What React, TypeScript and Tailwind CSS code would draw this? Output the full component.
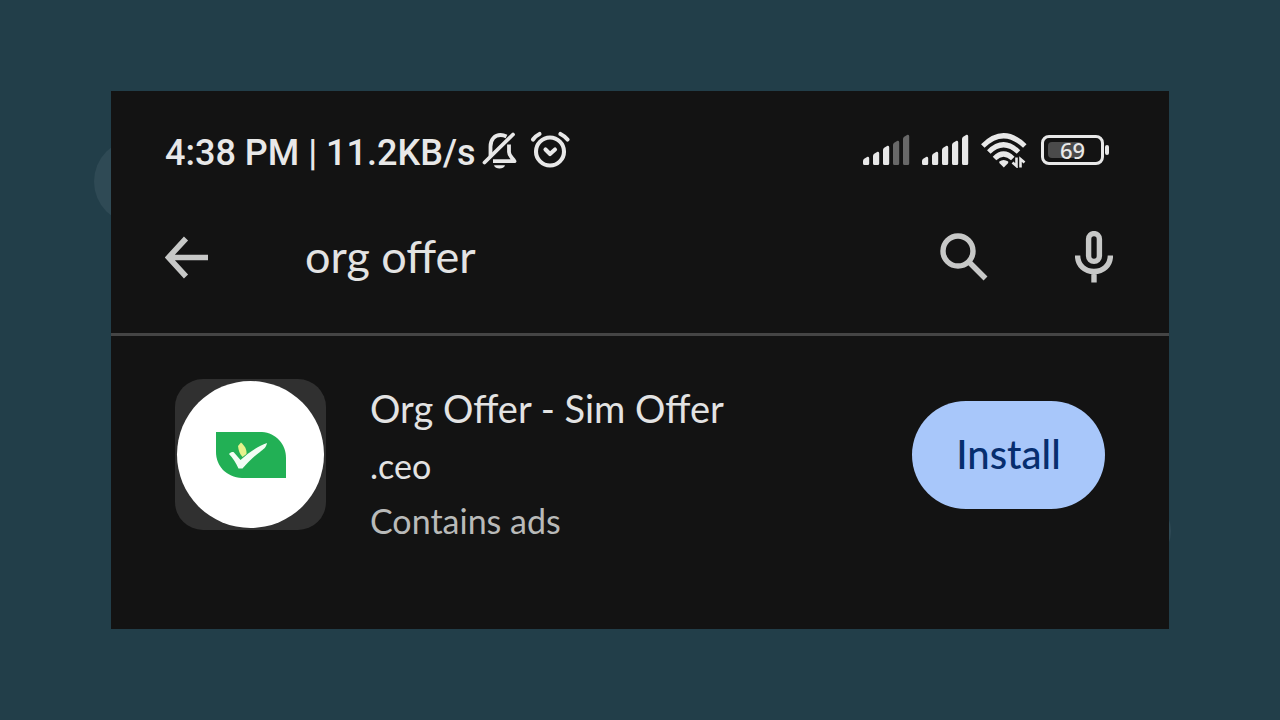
import { useState } from "react";

const APP = {
  name: "Org Offer - Sim Offer",
  developer: ".ceo",
  note: "Contains ads",
};

const BARS = [
  { x: 0, top: 22 },
  { x: 10, top: 17 },
  { x: 20, top: 11 },
  { x: 30, top: 6 },
  { x: 40, top: 0 },
];

function BellOffIcon() {
  return (
    <svg viewBox="0 0 36 38" fill="none" stroke="currentColor" strokeWidth={3.8} className="w-9 h-[38px] shrink-0">
      <path d="M2.500 31.500 L31 3.500" strokeLinecap="round" />
      <path d="M8.500 25 V15.500 C8.500 8 13 4 18.500 4 C20.500 4 22.500 4.500 24.500 5.500" />
      <path d="M27 13.500 V21 C27 25.500 31 27 32.500 30.200 H11" strokeLinejoin="round" />
      <path d="M12 34.200 H23 C22 38.500 13 38.500 12 34.200 Z" fill="currentColor" stroke="none" />
    </svg>
  );
}

function AlarmIcon() {
  return (
    <svg
      viewBox="0 0 40 38"
      fill="none"
      stroke="currentColor"
      strokeWidth={4.1}
      strokeLinecap="round"
      strokeLinejoin="round"
      className="w-10 h-[38px] shrink-0"
    >
      <circle cx="20" cy="20.500" r="14" />
      <path d="M15.500 18.500 L20 23 L25 18.500" />
      <path d="M3 8.500 Q5.500 5 9.500 3" />
      <path d="M30.500 3 Q34.500 5 37.500 8.500" />
    </svg>
  );
}

function SignalIcon({ level }: { level: number }) {
  return (
    <svg viewBox="0 0 47 32" fill="currentColor" className="w-[47px] h-8 shrink-0">
      {BARS.map((bar, idx) => (
        <path
          key={bar.x}
          opacity={idx < level ? 1 : 0.4}
          d={`M${bar.x} ${bar.top + 5} Q${bar.x} ${bar.top + 3.5} ${bar.x + 1.2} ${bar.top + 2.8} L${bar.x + 4.5} ${bar.top + 0.8} Q${bar.x + 6.2} ${bar.top + 0.3} ${bar.x + 6.2} ${bar.top + 2.3} V29.500 Q${bar.x + 6.2} 31 ${bar.x + 4.7} 31 H${bar.x + 1.5} Q${bar.x} 31 ${bar.x} 29.500 Z`}
        />
      ))}
    </svg>
  );
}

function WifiIcon() {
  return (
    <svg viewBox="0 0 46 36" fill="none" stroke="currentColor" className="w-[46px] h-9 shrink-0">
      <path d="M1.800 14 Q22.500 -6.500 43.800 14" strokeWidth={5} />
      <path d="M7.800 20 Q22.500 5.500 37.500 20" strokeWidth={5} />
      <path d="M13.500 26.500 Q22.500 17.500 31.800 26.500" strokeWidth={5} />
      <path d="M18.300 29.500 Q22.500 26.500 27.200 29.500 V31 L22.800 35.500 L18.300 31 Z" fill="currentColor" stroke="none" />
      <path d="M35.500 25.500 V34 L31.500 30.500 M39.500 35.500 V27 L43.500 30.500" strokeWidth={2.6} />
    </svg>
  );
}

function Battery({ value }: { value: number }) {
  return (
    <div className="flex items-center gap-px ml-0.5">
      <div className="grid w-[63px] h-[30px] rounded-lg border-[3px] border-[#e8e8e8]">
        <div className="flex col-start-1 row-start-1 p-1">
          <span className="rounded-sm bg-[#4b4b4b]" style={{ width: `${value}%` }} />
        </div>
        <span className="col-start-1 row-start-1 text-center font-['Noto_Sans',sans-serif] text-[22px] leading-6 font-medium">
          {value}
        </span>
      </div>
      <span className="w-1 h-2.5 rounded-sm bg-[#e8e8e8]" />
    </div>
  );
}

function StatusBar() {
  return (
    <div className="flex items-center justify-between h-12 pl-[54px] pr-[60px] text-[#e8e8e8]">
      <div className="flex items-center">
        <span className="font-[Roboto,sans-serif] text-[36px] leading-[48px] pt-1 font-medium whitespace-nowrap">
          4:38 PM | 11.2KB/s
        </span>
        <div className="flex items-center gap-3 pl-1.5 pb-0.5">
          <BellOffIcon />
          <AlarmIcon />
        </div>
      </div>
      <div className="flex items-center gap-3 pb-0.5">
        <SignalIcon level={3} />
        <SignalIcon level={5} />
        <WifiIcon />
        <Battery value={69} />
      </div>
    </div>
  );
}

function SearchBar() {
  const [query, setQuery] = useState("org offer");

  return (
    <form
      onSubmit={(e) => e.preventDefault()}
      className="flex items-center pl-[54px] pr-14 pt-[52px] pb-[46px] border-b-[3px] border-[#454545] text-[#c7c8c7]"
    >
      <button type="button" aria-label="Back" className="shrink-0">
        <svg viewBox="0 0 44 44" fill="none" stroke="currentColor" strokeWidth={5.6} className="w-11 h-11">
          <path d="M21 3.500 L3.500 22.500 L21 41.500 M4 22.500 H43" />
        </svg>
      </button>
      <input
        type="text"
        aria-label="Search apps"
        value={query}
        onChange={(e) => setQuery(e.target.value)}
        className="flex-1 min-w-0 h-[60px] ml-24 bg-transparent outline-none text-[45px] text-[#e3e3e3]"
      />
      <button type="submit" aria-label="Search" className="shrink-0">
        <svg viewBox="0 0 48 48" fill="none" stroke="currentColor" strokeWidth={5.4} className="w-12 h-12">
          <circle cx="18" cy="18" r="15" />
          <path d="M28.500 28.500 L45.500 45.500" />
        </svg>
      </button>
      <button type="button" aria-label="Voice search" className="shrink-0 ml-[87px]">
        <svg viewBox="0 0 38 52" fill="none" stroke="currentColor" strokeWidth={5.4} className="w-[38px] h-[52px]">
          <rect x="13.600" y="2.600" width="10.800" height="27.800" rx="5.400" />
          <path d="M2.600 24.500 C2.600 34.500 10 40.500 19 40.500 C28 40.500 35.400 34.500 35.400 24.500 M19 40.500 V51.500" />
        </svg>
      </button>
    </form>
  );
}

function AppLogo() {
  return (
    <div className="flex items-center justify-center shrink-0 size-[151px] rounded-[28px] bg-[#303030]">
      <div className="flex items-center justify-center size-[147px] rounded-full bg-white">
        <svg viewBox="0 0 70 46" className="w-[70px] h-[46px]">
          <path d="M0 0 H46 C60 1 70 12 70 26 V46 H26 C10 45 0 34 0 20 Z" fill="#22b055" />
          <path d="M22 14 L25 10.500 C28 13 31 17 30.500 22 L26.500 25 C23.500 22 22.500 18 22 14 Z" fill="#e6f28c" />
          <path
            d="M13 22 C15 20 17 19.500 18 20.500 L24.500 28 C32 21 42 14 51 11 C50 16 47 17.500 44 20 C38 24 31 31 26.500 36.500 H22.500 C20 31 17 26 13 22 Z"
            fill="#f2fdf4"
          />
        </svg>
      </div>
    </div>
  );
}

function AppRow() {
  return (
    <div className="flex items-center px-16 pt-[43px] pb-[99px]">
      <AppLogo />
      <div className="flex-1 min-w-0 h-[151px] ml-11 text-[#e3e3e3]">
        <h1 className="text-[38px] leading-[58px] whitespace-nowrap">{APP.name}</h1>
        <p className="text-[34px] leading-[58px]">{APP.developer}</p>
        <p className="text-[34px] leading-[52px] text-[#b9bab9]">{APP.note}</p>
      </div>
      <button
        type="button"
        className="shrink-0 w-[193px] h-[108px] pb-0.5 rounded-full bg-[#a8c7fa] text-[40px] font-medium text-[#062e6f]"
      >
        Install
      </button>
    </div>
  );
}

export default function App() {
  return (
    <main className="flex items-center justify-center min-h-screen px-[111px] bg-[#223e49] font-[Lato,sans-serif]">
      <div className="relative w-full">
        {/* soft circles that peek out from behind the card */}
        <span className="absolute -left-[17px] top-12 size-[85px] rounded-full bg-[#2f4a55]" />
        <span className="absolute -right-0.5 bottom-16 size-[68px] rounded-full bg-[#2f4a55]" />
        <section className="relative w-full pt-9 bg-[#131313]">
          <StatusBar />
          <SearchBar />
          <AppRow />
        </section>
      </div>
    </main>
  );
}
